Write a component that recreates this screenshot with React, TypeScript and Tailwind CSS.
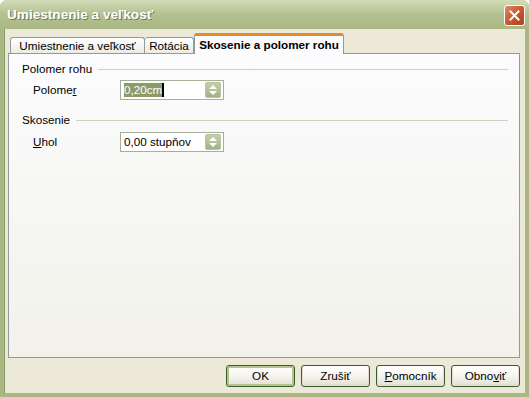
const Spin = () => (
  <div className="w-[16px] h-[16px] rounded-[2px] bg-gradient-to-b from-[#c4cfaa] to-[#a3b283] border border-[#b9c49c] flex flex-col items-center justify-center gap-[2px]">
    <svg width="8" height="4" viewBox="0 0 8 4">
      <path d="M0 4 L4 0 L8 4 Z" fill="#ffffff" />
    </svg>
    <svg width="8" height="4" viewBox="0 0 8 4">
      <path d="M0 0 L4 4 L8 0 Z" fill="#ffffff" />
    </svg>
  </div>
);

const Legend = ({ text }: { text: string }) => (
  <div className="flex items-center h-[14px] pl-[13px] pr-[11px]">
    <span className="text-black">{text}</span>
    <div className="flex-1 h-px bg-[#d0d0bf] ml-[6px]" />
  </div>
);

const Btn = ({ children, def }: { children: React.ReactNode; def?: boolean }) => (
  <div
    className={
      "w-[69px] h-[22px] rounded-[3px] border border-[#3c5a2b] bg-gradient-to-b from-[#ffffff] via-[#f5f4ee] to-[#e3e1d4] flex items-center justify-center text-black " +
      (def ? "shadow-[inset_0_0_0_2px_#b4c48f]" : "shadow-[inset_0_-1px_0_1px_#e2dfd0]")
    }
  >
    {children}
  </div>
);

export default function App() {
  return (
    <div className="w-[529px] h-[397px] flex flex-col bg-[#a8b784] rounded-t-[7px] overflow-hidden text-[11.7px] leading-[14px] font-['Tahoma','Liberation_Sans',sans-serif]">
      <div className="h-[29px] shrink-0 flex items-center justify-between pl-[7px] pr-[4px] bg-gradient-to-b from-[#d3dcba] via-[#b3c08f] to-[#a9b785]">
        <span className="text-white font-bold text-[13.6px] [text-shadow:1px_1px_0_#6e7a4e]">
          Umiestnenie a veľkosť
        </span>
        <div className="w-[21px] h-[21px] mt-[1px] rounded-[3px] border border-white bg-gradient-to-br from-[#e08a62] via-[#c9582f] to-[#b0401c] flex items-center justify-center">
          <svg width="11" height="11" viewBox="0 0 11 11">
            <path d="M1.5 1.5 L9.5 9.5 M9.5 1.5 L1.5 9.5" stroke="#ffffff" strokeWidth="2" strokeLinecap="square" />
          </svg>
        </div>
      </div>

      <div className="flex-1 flex flex-col bg-[#ece9d8] ml-[4px] mr-[4px] mb-[4px] border-l border-[#8c9b66] pl-[3px] pr-[5px] pt-[4px]">
        <div className="h-[20px] flex items-end pl-[2px] relative z-10">
          <div className="w-[135px] h-[16px] flex items-center justify-center rounded-t-[3px] border border-b-0 border-[#919b9c] bg-gradient-to-b from-white to-[#ecebe3] text-black">
            Umiestnenie a veľkosť
          </div>
          <div className="w-[49px] h-[16px] flex items-center justify-center rounded-t-[3px] border border-b-0 border-l-0 border-[#919b9c] bg-gradient-to-b from-white to-[#ecebe3] text-black">
            Rotácia
          </div>
          <div className="w-[150px] h-[21px] -mb-px flex items-center justify-center rounded-t-[3px] border border-b-0 border-[#919b9c] border-t-[3px] border-t-[#e68b2c] bg-[#fcfcfe] text-black font-bold">
            Skosenie a polomer rohu
          </div>
        </div>

        <div className="h-[305px] border border-[#919b9c] bg-gradient-to-b from-[#fcfcfe] to-[#f2f1ea] pt-[8px]">
          <Legend text="Polomer rohu" />
          <div className="flex items-center h-[20px] mt-[4px] pl-[24px]">
            <span className="w-[87px]">
              Polome<span className="underline">r</span>
            </span>
            <div className="w-[104px] h-[20px] border border-[#a5b098] bg-white flex items-center justify-between pl-[3px] pr-[2px]">
              <div className="flex items-center">
                <span className="bg-[#8d9b6b] text-white">0,20cm</span>
                <span className="w-[2px] h-[14px] bg-black" />
              </div>
              <Spin />
            </div>
          </div>

          <div className="mt-[13px]">
            <Legend text="Skosenie" />
          </div>
          <div className="flex items-center h-[20px] mt-[5px] pl-[24px]">
            <span className="w-[87px]">
              <span className="underline">U</span>hol
            </span>
            <div className="w-[104px] h-[20px] border border-[#a5b098] bg-white flex items-center justify-between pl-[3px] pr-[2px]">
              <span>0,00 stupňov</span>
              <Spin />
            </div>
          </div>
        </div>

        <div className="flex justify-end gap-[6px] mt-[7px]">
          <Btn def>OK</Btn>
          <Btn>Zrušiť</Btn>
          <Btn>
            <span className="underline">P</span>omocník
          </Btn>
          <Btn>
            Obno<span className="underline">v</span>iť
          </Btn>
        </div>
      </div>
    </div>
  );
}
